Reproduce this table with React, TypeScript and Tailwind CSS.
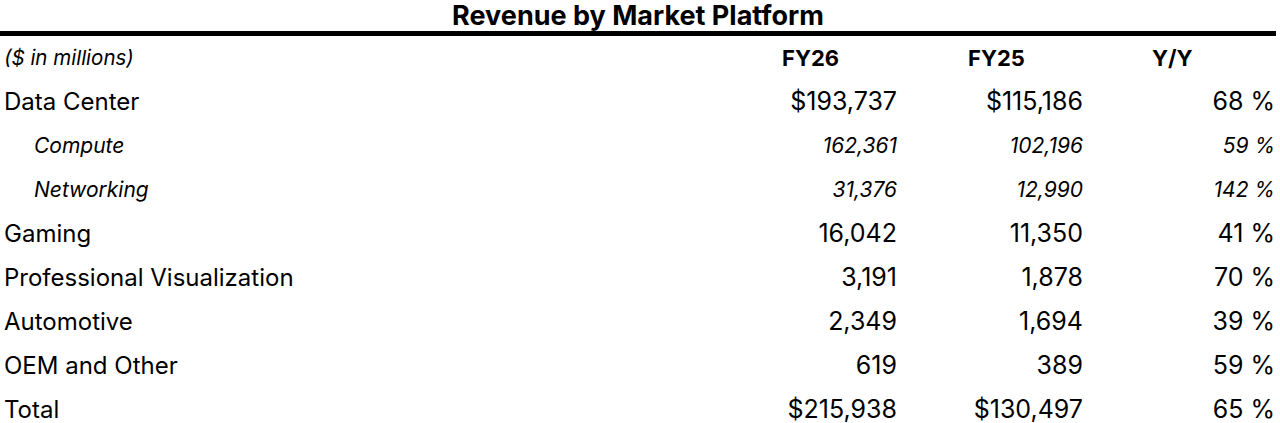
import * as React from "react";

type Row = {
  label: string;
  fy26: string;
  fy25: string;
  yy: string;
  sub?: boolean;
};

const rows: Row[] = [
  { label: "Data Center", fy26: "$193,737", fy25: "$115,186", yy: "68 %" },
  { label: "Compute", fy26: "162,361", fy25: "102,196", yy: "59 %", sub: true },
  { label: "Networking", fy26: "31,376", fy25: "12,990", yy: "142 %", sub: true },
  { label: "Gaming", fy26: "16,042", fy25: "11,350", yy: "41 %" },
  { label: "Professional Visualization", fy26: "3,191", fy25: "1,878", yy: "70 %" },
  { label: "Automotive", fy26: "2,349", fy25: "1,694", yy: "39 %" },
  { label: "OEM and Other", fy26: "619", fy25: "389", yy: "59 %" },
  { label: "Total", fy26: "$215,938", fy25: "$130,497", yy: "65 %" },
];

const grid = "grid grid-cols-[1fr_186px_186px_190px] items-center h-[44px]";

export default function App() {
  return (
    <div className="w-[1276px] bg-white text-black font-['Inter',sans-serif]">
      <div className="h-[36px] border-b-[5px] border-black flex items-center justify-center">
        <span className="text-[27px] font-bold leading-none">
          Revenue by Market Platform
        </span>
      </div>

      <div className={grid}>
        <div className="pl-[4px] text-[20.5px] italic">($ in millions)</div>
        <div className="pl-[68px] text-[22px] font-bold">FY26</div>
        <div className="pl-[68px] text-[22px] font-bold">FY25</div>
        <div className="pl-[66px] text-[22px] font-bold">Y/Y</div>
      </div>

      {rows.map((r, i) => {
        const num = r.sub ? "text-[21px] italic" : "text-[25px]";
        return (
          <div key={i} className={grid}>
            <div
              className={
                r.sub ? "pl-[34px] text-[21px] italic" : "pl-[4px] text-[24px]"
              }
            >
              {r.label}
            </div>
            <div className={"text-right pr-[3px] " + num}>{r.fy26}</div>
            <div className={"text-right pr-[3px] " + num}>{r.fy25}</div>
            <div className={"text-right pr-[1px] " + num}>{r.yy}</div>
          </div>
        );
      })}
    </div>
  );
}
